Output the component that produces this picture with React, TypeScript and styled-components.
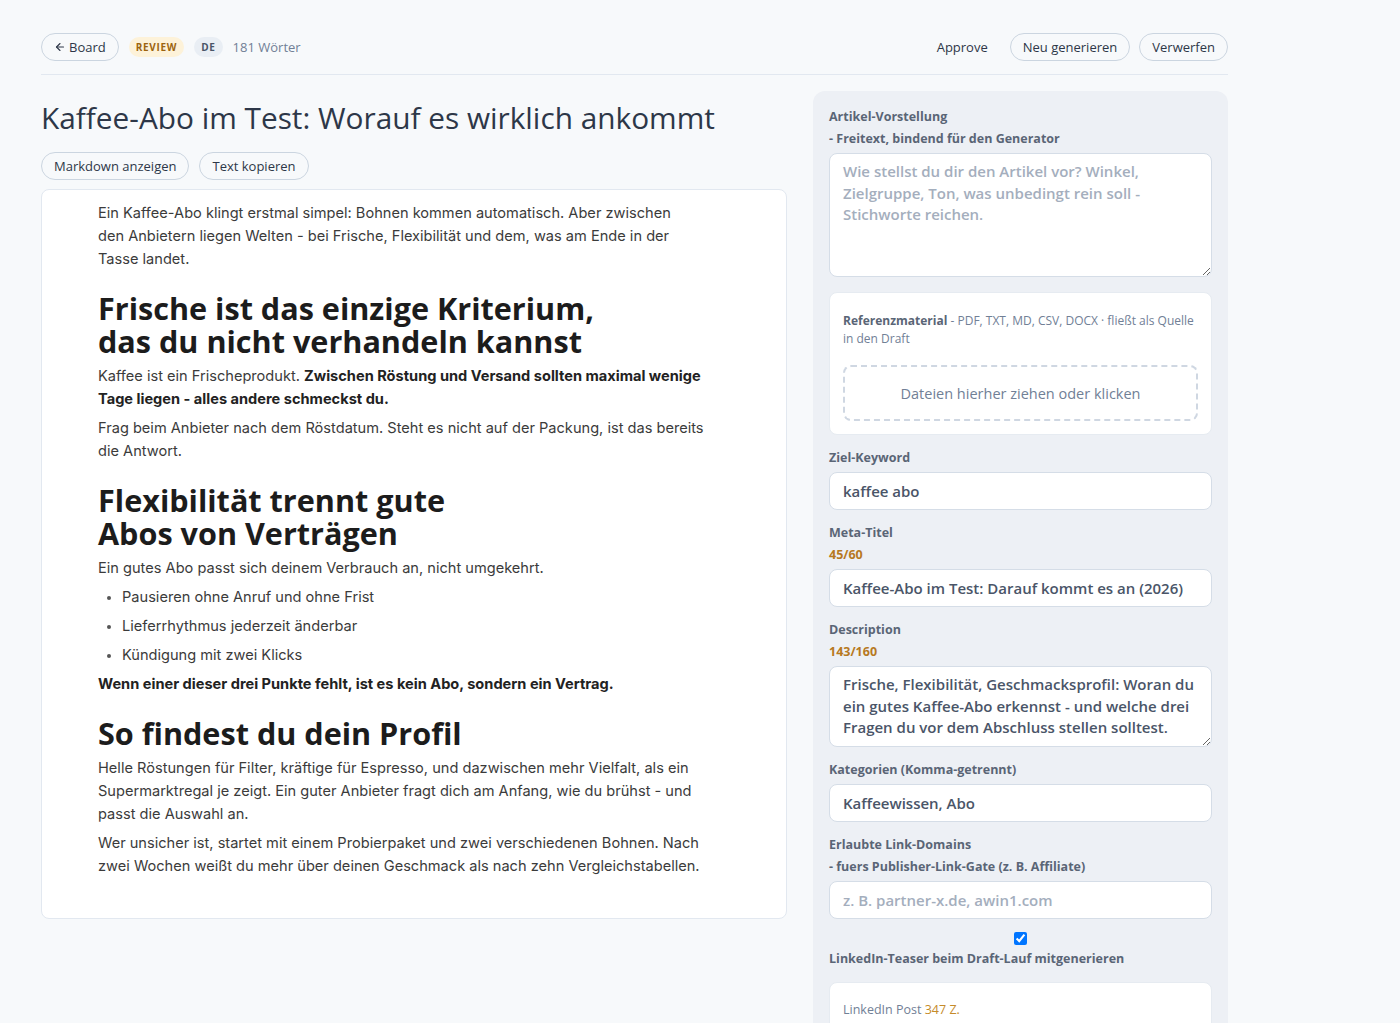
import React from "react";
import styled, { createGlobalStyle } from "styled-components";
import { ArrowLeft } from "lucide-react";

const GlobalStyle = createGlobalStyle`
  * { box-sizing: border-box; }
  html, body { margin: 0; padding: 0; }
  body {
    background: #f7f9fb;
    font-family: "Open Sans", "Noto Sans", sans-serif;
    color: #2d3748;
  }
`;

const Page = styled.div`
  padding: 33px 0 0 41px;
`;

const Container = styled.div`
  width: 1187px;
`;

const Header = styled.header`
  display: flex;
  align-items: center;
  justify-content: space-between;
  padding-bottom: 13px;
  border-bottom: 1px solid #e2e8f0;
`;

const Group = styled.div<{ $gap?: number }>`
  display: flex;
  align-items: center;
  gap: ${(p) => p.$gap ?? 10}px;
`;

const PillButton = styled.button<{ $plain?: boolean }>`
  display: inline-flex;
  align-items: center;
  gap: 3px;
  height: 28px;
  padding: 0 12px;
  border-radius: 999px;
  border: 1px solid ${(p) => (p.$plain ? "transparent" : "#cbd5e0")};
  background: transparent;
  font-family: "Open Sans", sans-serif;
  font-size: 13px;
  font-weight: 500;
  color: #2d3748;
  cursor: pointer;
`;

const Badge = styled.span<{ $tone: "amber" | "gray" }>`
  display: inline-flex;
  align-items: center;
  height: 20px;
  padding: 0 7px;
  border-radius: 999px;
  font-size: 10px;
  font-weight: 700;
  letter-spacing: 0.07em;
  background: ${(p) => (p.$tone === "amber" ? "#fdf2d9" : "#e9eef4")};
  color: ${(p) => (p.$tone === "amber" ? "#9c640e" : "#4a5568")};
`;

const Meta = styled.span`
  font-size: 13px;
  color: #718096;
`;

const Main = styled.div`
  display: grid;
  grid-template-columns: 746px 415px;
  gap: 26px;
  margin-top: 16px;
  align-items: start;
`;

const Left = styled.div`
  display: flex;
  flex-direction: column;
`;

const Title = styled.h1`
  margin: 9px 0 0;
  font-size: 29.8px;
  line-height: 36px;
  font-weight: 500;
  color: #2d3748;
`;

const ActionRow = styled.div`
  display: flex;
  gap: 10px;
  margin-top: 16px;
`;

const ArticleCard = styled.article`
  margin-top: 9px;
  background: #fff;
  border: 1px solid #e2e8f0;
  border-radius: 8px;
  padding: 12px 56px 34px;
  font-family: Inter, "Liberation Sans", Arial, sans-serif;
  font-size: 14.6px;
  line-height: 23px;
  color: #3b3b3b;
`;

const P = styled.p`
  margin: 6px 0;
  text-wrap: pretty;
  &:first-child { margin-top: 0; }
  strong { font-weight: 700; color: #222; }
`;

const H2 = styled.h2`
  margin: 21px 0 7px;
  font-family: "Open Sans", sans-serif;
  font-size: 30.6px;
  line-height: 33px;
  font-weight: 700;
  color: #1c1c1c;
  text-wrap: balance;
`;

const List = styled.ul`
  margin: 6px 0;
  padding-left: 24px;
  li { margin: 6px 0; }
  li::marker { font-size: 12px; color: #555; }
`;

const Panel = styled.aside`
  background: #edf0f5;
  border-radius: 12px;
  padding: 15px 16px 40px;
  display: flex;
  flex-direction: column;
  gap: 12px;
`;

const Field = styled.div`
  display: flex;
  flex-direction: column;
  gap: 3px;
`;

const Label = styled.div`
  font-size: 12.5px;
  line-height: 22px;
  font-weight: 700;
  color: #5a6576;
`;

const Counter = styled.div`
  font-size: 12.5px;
  line-height: 22px;
  font-weight: 700;
  color: #b7791f;
`;

const inputBase = `
  width: 100%;
  border: 1px solid #d5dde7;
  border-radius: 8px;
  background: #fff;
  font-family: "Open Sans", sans-serif;
  font-size: 15px;
  font-weight: 600;
  color: #4a5568;
  padding: 0 13px;
  outline: none;
  &::placeholder { color: #a4aebd; font-weight: 600; }
`;

const Input = styled.input`
  ${inputBase}
  height: 38px;
`;

const TextArea = styled.textarea<{ $h: number }>`
  ${inputBase}
  display: block;
  height: ${(p) => p.$h}px;
  padding-top: 7px;
  padding-bottom: 7px;
  line-height: 21.5px;
  resize: vertical;
`;

const Card = styled.div`
  background: #fff;
  border-radius: 8px;
  border: 1px solid #e6ebf1;
  padding: 19px 13px 13px;
`;

const RefCard = styled(Card)`
  margin-top: 3px;
`;

const CardText = styled.div`
  font-size: 12px;
  line-height: 18px;
  color: #718096;
  strong { color: #5a6576; font-weight: 700; }
`;

const DropZone = styled.div`
  margin-top: 17px;
  height: 56px;
  border: 2px dashed #cfd7e2;
  border-radius: 8px;
  display: flex;
  align-items: center;
  justify-content: center;
  font-size: 14.5px;
  color: #718096;
`;

const CheckField = styled.label`
  display: flex;
  flex-direction: column;
  gap: 3px;
  margin-top: 1px;
`;

const Check = styled.input`
  align-self: center;
  margin: 0;
  width: 13px;
  height: 13px;
`;

const Amber = styled.span`
  color: #c58b2a;
`;

const LinkedInCard = styled(Card)`
  padding-top: 18px;
  height: 90px;
`;

const LinkedInText = styled(CardText)`
  font-size: 12.5px;
`;

export default function App() {
  return (
    <>
      <GlobalStyle />
      <Page>
        <Container>
          <Header>
            <Group>
              <PillButton>
                <ArrowLeft size={12} strokeWidth={2.2} />
                Board
              </PillButton>
              <Badge $tone="amber">REVIEW</Badge>
              <Badge $tone="gray">DE</Badge>
              <Meta>181 Wörter</Meta>
            </Group>
            <Group $gap={9}>
              <PillButton $plain>Approve</PillButton>
              <PillButton>Neu generieren</PillButton>
              <PillButton>Verwerfen</PillButton>
            </Group>
          </Header>

          <Main>
            <Left>
              <Title>Kaffee-Abo im Test: Worauf es wirklich ankommt</Title>
              <ActionRow>
                <PillButton>Markdown anzeigen</PillButton>
                <PillButton>Text kopieren</PillButton>
              </ActionRow>
              <ArticleCard>
                <P>
                  Ein Kaffee-Abo klingt erstmal simpel: Bohnen kommen automatisch. Aber zwischen den
                  Anbietern liegen Welten - bei Frische, Flexibilität und dem, was am Ende in der
                  Tasse landet.
                </P>
                <H2>Frische ist das einzige Kriterium, das du nicht verhandeln kannst</H2>
                <P>
                  Kaffee ist ein Frischeprodukt.{" "}
                  <strong>
                    Zwischen Röstung und Versand sollten maximal wenige Tage liegen - alles andere
                    schmeckst du.
                  </strong>
                </P>
                <P>
                  Frag beim Anbieter nach dem Röstdatum. Steht es nicht auf der Packung, ist das
                  bereits die Antwort.
                </P>
                <H2>Flexibilität trennt gute Abos von Verträgen</H2>
                <P>Ein gutes Abo passt sich deinem Verbrauch an, nicht umgekehrt.</P>
                <List>
                  <li>Pausieren ohne Anruf und ohne Frist</li>
                  <li>Lieferrhythmus jederzeit änderbar</li>
                  <li>Kündigung mit zwei Klicks</li>
                </List>
                <P>
                  <strong>Wenn einer dieser drei Punkte fehlt, ist es kein Abo, sondern ein Vertrag.</strong>
                </P>
                <H2>So findest du dein Profil</H2>
                <P>
                  Helle Röstungen für Filter, kräftige für Espresso, und dazwischen mehr Vielfalt, als
                  ein Supermarktregal je zeigt. Ein guter Anbieter fragt dich am Anfang, wie du brühst
                  - und passt die Auswahl an.
                </P>
                <P>
                  Wer unsicher ist, startet mit einem Probierpaket und zwei verschiedenen Bohnen. Nach
                  zwei Wochen weißt du mehr über deinen Geschmack als nach zehn Vergleichstabellen.
                </P>
              </ArticleCard>
            </Left>

            <Panel>
              <Field>
                <div>
                  <Label>Artikel-Vorstellung</Label>
                  <Label>- Freitext, bindend für den Generator</Label>
                </div>
                <TextArea
                  $h={124}
                  placeholder="Wie stellst du dir den Artikel vor? Winkel, Zielgruppe, Ton, was unbedingt rein soll - Stichworte reichen."
                />
              </Field>

              <RefCard>
                <CardText>
                  <strong>Referenzmaterial</strong> - PDF, TXT, MD, CSV, DOCX · fließt als Quelle in
                  den Draft
                </CardText>
                <DropZone>Dateien hierher ziehen oder klicken</DropZone>
              </RefCard>

              <Field>
                <Label>Ziel-Keyword</Label>
                <Input defaultValue="kaffee abo" />
              </Field>

              <Field>
                <div>
                  <Label>Meta-Titel</Label>
                  <Counter>45/60</Counter>
                </div>
                <Input defaultValue="Kaffee-Abo im Test: Darauf kommt es an (2026)" />
              </Field>

              <Field>
                <div>
                  <Label>Description</Label>
                  <Counter>143/160</Counter>
                </div>
                <TextArea
                  $h={81}
                  defaultValue="Frische, Flexibilität, Geschmacksprofil: Woran du ein gutes Kaffee-Abo erkennst - und welche drei Fragen du vor dem Abschluss stellen solltest."
                />
              </Field>

              <Field>
                <Label>Kategorien (Komma-getrennt)</Label>
                <Input defaultValue="Kaffeewissen, Abo" />
              </Field>

              <Field>
                <div>
                  <Label>Erlaubte Link-Domains</Label>
                  <Label>- fuers Publisher-Link-Gate (z. B. Affiliate)</Label>
                </div>
                <Input placeholder="z. B. partner-x.de, awin1.com" />
              </Field>

              <CheckField>
                <Check type="checkbox" defaultChecked />
                <Label>LinkedIn-Teaser beim Draft-Lauf mitgenerieren</Label>
              </CheckField>

              <LinkedInCard>
                <LinkedInText>
                  LinkedIn Post <Amber>347 Z.</Amber>
                </LinkedInText>
              </LinkedInCard>
            </Panel>
          </Main>
        </Container>
      </Page>
    </>
  );
}
